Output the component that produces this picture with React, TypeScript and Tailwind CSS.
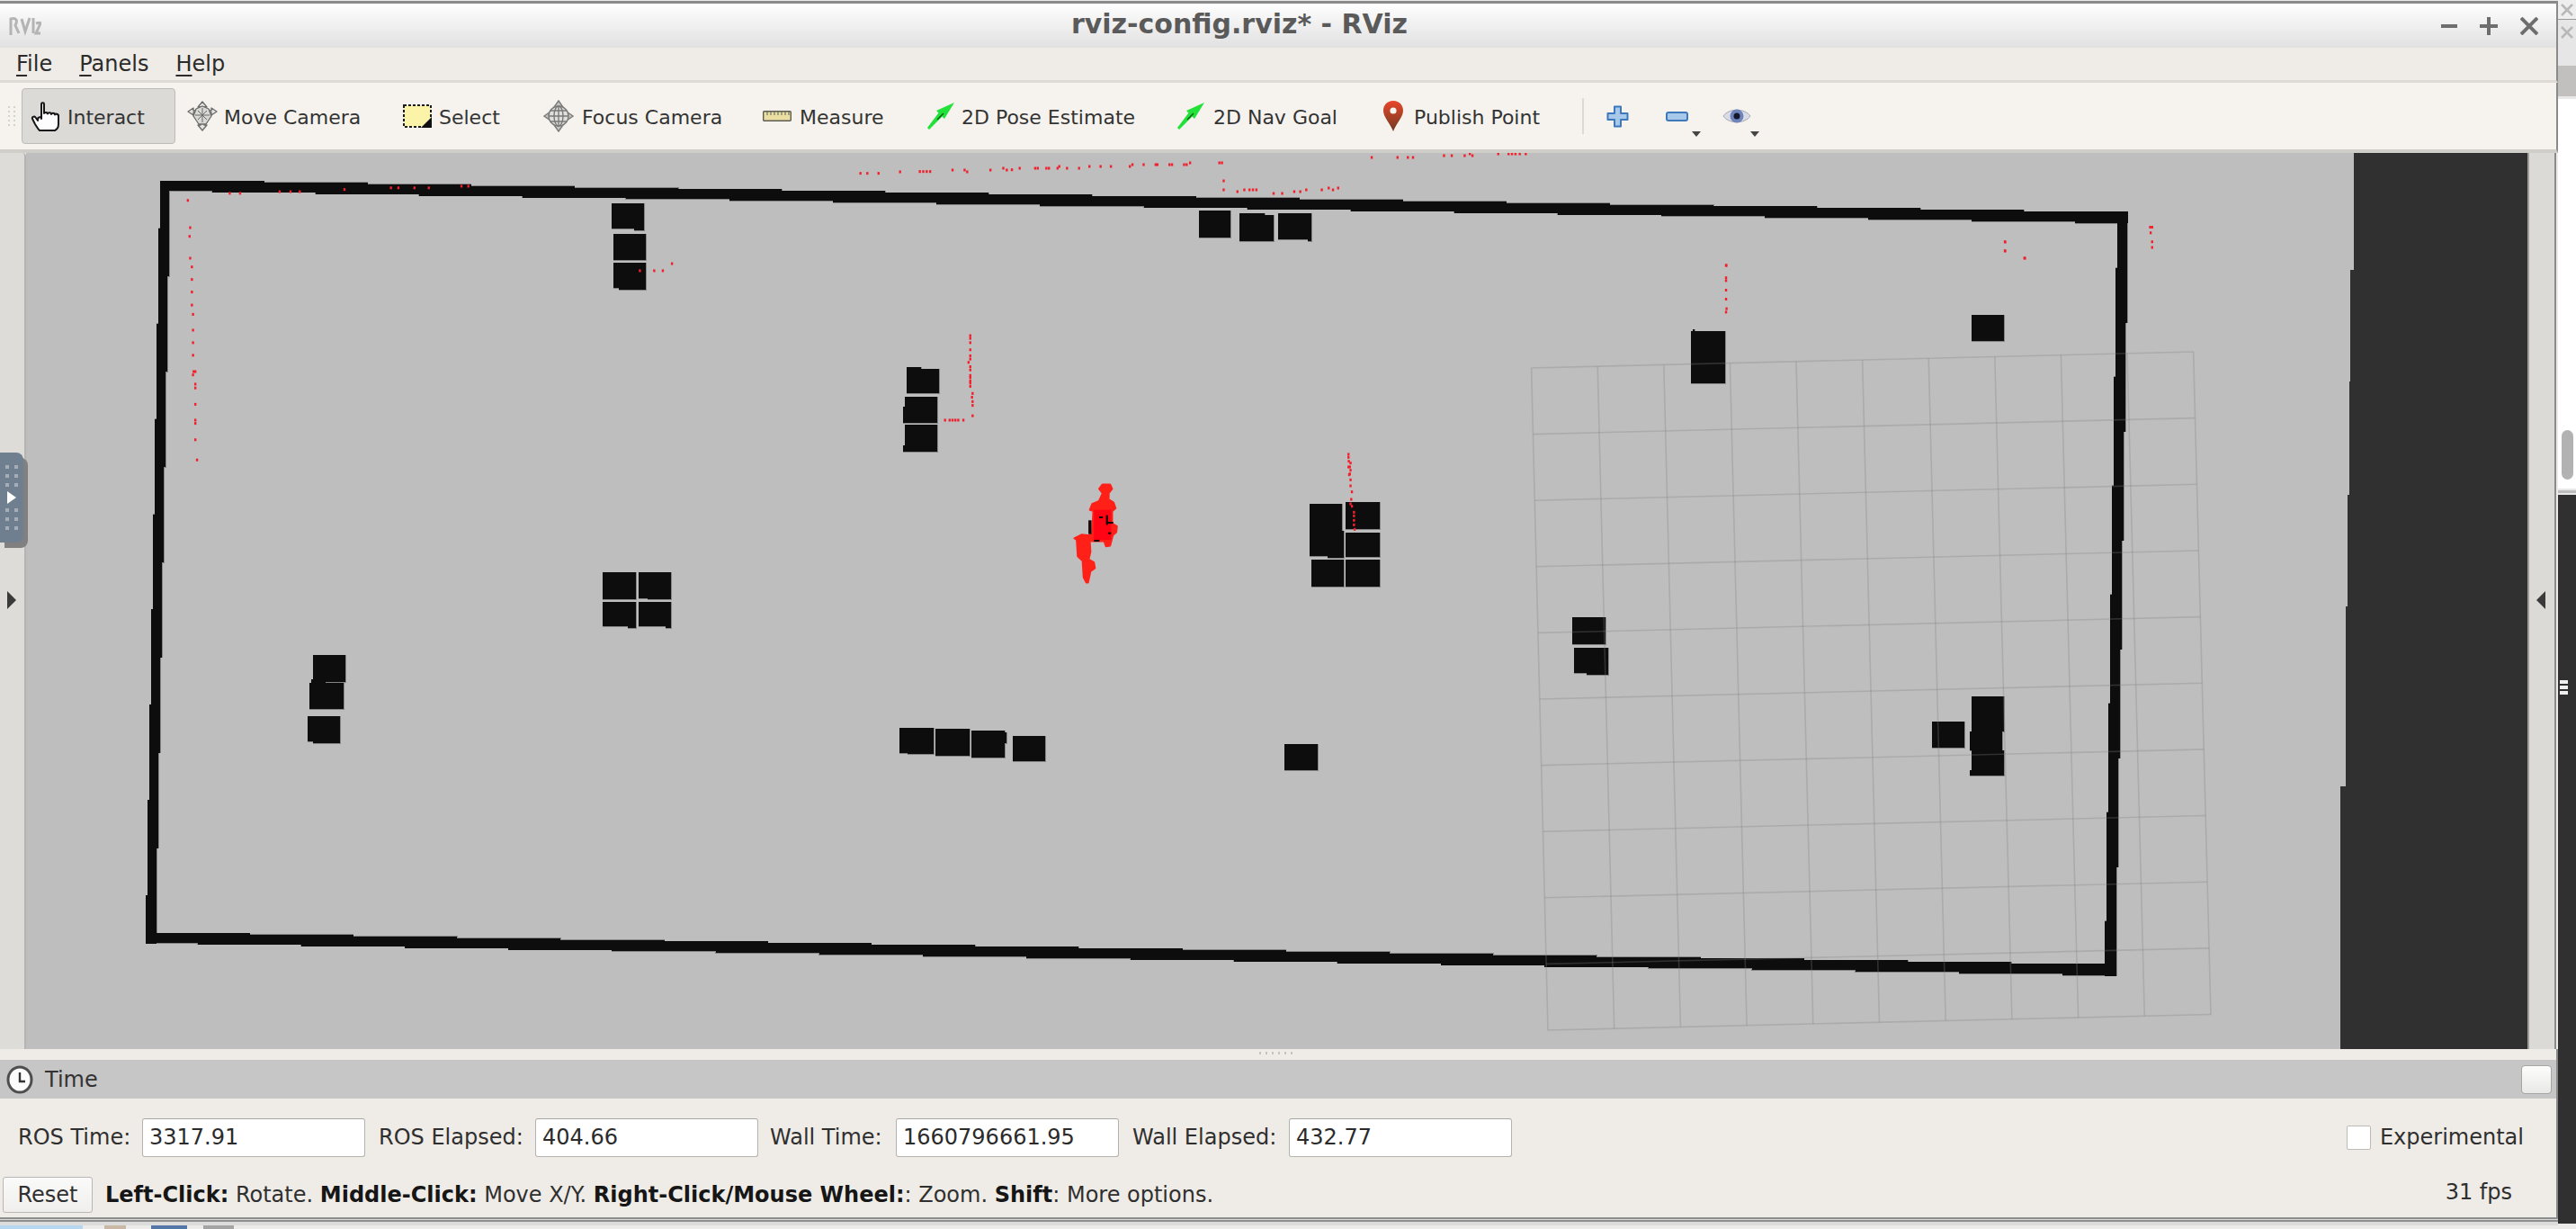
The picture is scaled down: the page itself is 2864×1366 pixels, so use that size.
import React from "react";

type R = [number, number, number, number];

const blocks: R[] = [
  [680, 226, 716, 254], [705, 252, 716, 256], [682, 260, 718, 289], [682, 292, 718, 320], [688, 319, 718, 322],
  [670, 636, 707, 666], [710, 636, 746, 665], [720, 664, 746, 666], [670, 669, 707, 696], [698, 695, 707, 698], [710, 669, 746, 696], [740, 695, 746, 698],
  [348, 728, 384, 758], [346, 755, 362, 760], [344, 759, 382, 788], [342, 796, 378, 824], [348, 823, 378, 826],
  [1008, 408, 1024, 412], [1008, 410, 1044, 437], [1006, 441, 1042, 470], [1004, 452, 1007, 470], [1006, 472, 1042, 502], [1004, 495, 1007, 502],
  [1000, 809, 1038, 837], [1009, 836, 1038, 838], [1040, 810, 1078, 840], [1080, 812, 1117, 842], [1116, 814, 1119, 826], [1126, 818, 1162, 846],
  [1333, 234, 1368, 264], [1378, 237, 1406, 268], [1406, 239, 1416, 268], [1421, 237, 1458, 266], [1454, 265, 1458, 268],
  [1456, 560, 1492, 618], [1476, 590, 1494, 620], [1496, 558, 1534, 588], [1496, 592, 1534, 619], [1458, 622, 1494, 652], [1496, 622, 1534, 652], [1532, 622, 1534, 640],
  [1880, 368, 1918, 426], [1882, 366, 1884, 369], [2192, 350, 2228, 379],
  [1748, 686, 1785, 716], [1750, 720, 1788, 748], [1764, 747, 1788, 750],
  [2148, 802, 2184, 831], [2192, 774, 2228, 813], [2190, 813, 2226, 834], [2192, 834, 2228, 862], [2190, 856, 2192, 862],
  [1428, 827, 1465, 856],
];

const z10 = (X: number, Y: number) => [900 + X / 1.045, 160 + Y / 3];
const z11 = (X: number, Y: number) => [150 + X / 1.568, 170 + Y / 1.65];
const z12 = (X: number, Y: number) => [1650 + X / 1.845, 190 + Y / 1.6];
const z7 = (X: number, Y: number) => [1000 + X / 2.613, 480 + Y / 3];

const dots: number[][] = [
  ...([
    [59, 98], [67, 98], [80, 98], [105, 93], [128, 92], [132, 92], [136, 92], [140, 92], [166, 87], [180, 87], [183, 93], [210, 87], [225, 81], [229, 87], [235, 86], [244, 81], [262, 81], [265, 81], [275, 81], [278, 81], [288, 81], [290, 75], [299, 81], [313, 81], [325, 75], [338, 75], [350, 75], [372, 75], [375, 69], [388, 69], [402, 69], [404, 69], [418, 69], [421, 69], [435, 69], [438, 69], [442, 63], [476, 63], [479, 63],
    [653, 45], [683, 45], [695, 45], [701, 45], [737, 39], [746, 39], [761, 39], [767, 33], [770, 39], [800, 33], [812, 33], [816, 33], [820, 33], [825, 33], [832, 33],
    [481, 123], [481, 153], [497, 159], [505, 153], [511, 153], [515, 153], [519, 153], [539, 165], [549, 165], [563, 159], [570, 159], [577, 153], [595, 153], [603, 147], [608, 153], [614, 147],
    [1389, 327], [1389, 357], [1412, 381], [1065, 405],
  ] as number[][]).map(([a, b]) => z10(a, b)),
  ...([
    [92, 87], [96, 137], [95, 153], [96, 193], [99, 209], [99, 232], [99, 255], [99, 279], [101, 296], [101, 325], [101, 348], [101, 371], [102, 401], [105, 401], [101, 407], [105, 424], [105, 431], [105, 461], [105, 490], [105, 496], [105, 526], [108, 563],
    [165, 74], [183, 74], [252, 71], [271, 71], [287, 71], [365, 67], [446, 64], [459, 64], [487, 64], [512, 64], [569, 61], [581, 61],
    [880, 216], [905, 216], [920, 216], [936, 203],
    [1456, 335], [1456, 340], [1456, 348], [1456, 361], [1456, 372], [1456, 378], [1453, 384], [1456, 392], [1456, 398], [1456, 408], [1456, 412], [1456, 418], [1456, 422], [1456, 428], [1460, 441], [1459, 448], [1460, 456], [1460, 463], [1460, 482],
    [1412, 490], [1420, 490], [1425, 490], [1430, 490], [1435, 490], [1444, 490],
  ] as number[][]).map(([a, b]) => z11(a, b)),
  ...([
    [496, 168], [496, 190], [496, 195], [496, 212], [496, 228], [497, 245], [496, 251], [1068, 126], [1068, 142], [1108, 155], [1366, 100], [1370, 100], [1367, 110], [1370, 126], [1370, 136],
  ] as number[][]).map(([a, b]) => z12(a, b)),
  ...([
    [1304, 75], [1304, 85], [1305, 98], [1310, 104], [1304, 117], [1308, 117], [1310, 128], [1308, 140], [1306, 143], [1310, 160], [1310, 180], [1314, 200], [1312, 225], [1310, 240], [1314, 248], [1320, 268], [1320, 280], [1320, 295], [1320, 310], [1322, 325],
  ] as number[][]).map(([a, b]) => z7(a, b)),
];

function hWall(x0: number, y0: number, x1: number, y1: number, H: number, L: number): R[] {
  const n = Math.ceil((x1 - x0) / L);
  const dy = (y1 - y0) / n;
  const step = (x1 - x0) / n;
  const out: R[] = [];
  for (let k = 0; k < 2 * n; k++) {
    const xa = x0 + (k * step) / 2;
    const top = y0 + Math.floor(k / 2) * dy;
    const bot = y0 + H + Math.floor((k + 1) / 2) * dy;
    out.push([xa, top, xa + step / 2 + 0.5, bot]);
  }
  return out;
}

function vWall(x0: number, y0: number, x1: number, y1: number, W: number, L: number): R[] {
  const n = Math.ceil((y1 - y0) / L);
  const dx = (x1 - x0) / n;
  const step = (y1 - y0) / n;
  const out: R[] = [];
  for (let k = 0; k < 2 * n; k++) {
    const ya = y0 + (k * step) / 2;
    const left = x0 + Math.floor((k + 1) / 2) * dx;
    const right = x0 + W + Math.floor(k / 2) * dx;
    out.push([left, ya, right, ya + step / 2 + 0.5]);
  }
  return out;
}

const walls: R[] = [
  ...hWall(178, 201, 2365, 237, 11, 118),
  ...hWall(162, 1037, 2351, 1073, 11, 118),
  ...vWall(178, 201, 162, 1048, 10, 111),
  ...vWall(2354, 237, 2340, 1084, 11, 122),
];

const rectProps = ([a, b, c, d]: R) => ({ x: a, y: b, width: c - a, height: d - b });

const C = { tl: [1702.6, 409], tr: [2438.6, 391], bl: [1721, 1145], br: [2458, 1127.5] };
const mix = (p: number[], q: number[], t: number) => [p[0] + (q[0] - p[0]) * t, p[1] + (q[1] - p[1]) * t];

function MapView() {
  const ticks = Array.from({ length: 11 }, (_, i) => i / 10);
  return (
    <svg viewBox="29 170 2781 996" className="block w-[2781px] h-[996px]">
      <rect x="29" y="170" width="2781" height="996" fill="#bebebe" />
      <path d="M2617 170H2810V1166H2602V1100V874H2608V674H2610V550H2612V424H2613V300H2617Z" fill="#303030" />
      <g shapeRendering="crispEdges">
        {[...walls, ...blocks].map((r, i) => (
          <rect key={i} {...rectProps(r)} fill="#858585" stroke="#858585" strokeWidth="1" />
        ))}
        {[...walls, ...blocks].map((r, i) => (
          <rect key={i} {...rectProps(r)} fill="#0d0d0d" />
        ))}
      </g>
      {dots.map(([x, y], i) => (
        <rect key={i} x={x - 1} y={y - 1.5} width="2.4" height="3" fill="#f2202c" />
      ))}
      <g transform="translate(1000 480) scale(0.3827 0.3333)">
        <path
          d="M590 175L612 175L618 190L608 205L608 225L622 235L628 255L618 265L618 305L632 315L630 335L620 345L612 380L600 382L595 365L558 365L555 352L552 345L555 400L550 425L565 435L568 455L555 465L548 503L543 503L535 485L532 430L518 415L515 360L508 355L530 342L552 345L560 340L563 265L553 260L560 240L580 230L590 205L580 190Z"
          fill="#ff2018"
          stroke="#ff2018"
          strokeWidth="5"
          strokeLinejoin="round"
        />
        <rect x="565" y="260" width="50" height="100" fill="#ff0414" />
        <g fill="#1a0505">
          <rect x="549" y="295" width="9" height="46" />
          <rect x="600" y="278" width="6" height="32" />
          <rect x="580" y="282" width="11" height="6" />
          <rect x="605" y="300" width="16" height="6" />
          <rect x="565" y="360" width="16" height="6" />
          <rect x="606" y="335" width="9" height="6" />
        </g>
      </g>
      <g stroke="#808080" strokeOpacity="0.3" strokeWidth="1.6" fill="none">
        {ticks.map((t) => {
          const a = mix(C.tl, C.tr, t);
          const b = mix(C.bl, C.br, t);
          return <line key={`v${t}`} x1={a[0]} y1={a[1]} x2={b[0]} y2={b[1]} />;
        })}
        {ticks.map((t) => {
          const a = mix(C.tl, C.bl, t);
          const b = mix(C.tr, C.br, t);
          return <line key={`h${t}`} x1={a[0]} y1={a[1]} x2={b[0]} y2={b[1]} />;
        })}
      </g>
    </svg>
  );
}

const HandIcon = () => (
  <svg viewBox="0 0 34 34" className="w-[34px] h-[34px]">
    <path
      d="M12 20V3.5C12 1.8 15 1.8 15 3.5V14C15 12.6 19 12.6 19 14.5C19 12.8 23 12.8 23 15C23 13.2 27 13.4 27 15.5C27 14 31 14.4 31 16.5V26C31 29 29 32 27 33H10C8 31 7 29 5 26L2 20C1.3 18 4 16.6 5.5 18.5L8 22V20.5C8 18 12 17 12 20Z"
      fill="#fdfdfd"
      stroke="#161616"
      strokeWidth="2"
      strokeLinejoin="round"
    />
  </svg>
);

const MoveIcon = () => (
  <svg viewBox="0 0 34 34" className="w-[34px] h-[34px]" fill="#e4e4e0" stroke="#6a6a6a" strokeWidth="1.3" strokeLinejoin="round">
    <path d="M17 1L22 7H19V27H22L17 33L12 27H15V7H12Z" />
    <path d="M1 12L7 8V11H27V8L33 12L27 16V13H7V16Z" />
    <path d="M10 9L17 6L24 9L27 17L21 26H13L7 17Z" fill="#d8d8d4" />
    <path d="M17 8V24M9 16H25M12 11L22 21M22 11L12 21" fill="none" strokeWidth="1" />
  </svg>
);

const SelectIcon = () => (
  <svg viewBox="0 0 32 26" className="w-[32px] h-[26px]">
    <rect x="1" y="1" width="30" height="24" fill="#fbf4a8" stroke="#1c1c1c" strokeWidth="2" strokeDasharray="3 2" />
    <path d="M32 14V26H20Z" fill="#101010" />
  </svg>
);

const FocusIcon = () => (
  <svg viewBox="0 0 34 36" className="w-[34px] h-[36px]" fill="none" stroke="#7a7a7a" strokeWidth="1.4">
    <path d="M17 1L22 8H12Z" fill="#c4c4c0" />
    <path d="M17 35L22 28H12Z" fill="#c4c4c0" />
    <path d="M1 18L8 13V23Z" fill="#c4c4c0" />
    <path d="M33 18L26 13V23Z" fill="#c4c4c0" />
    <circle cx="17" cy="18" r="11" fill="#dfdfdb" />
    <ellipse cx="17" cy="18" rx="5" ry="11" />
    <path d="M6 18H28M8 12H26M8 24H26M17 7V29" />
  </svg>
);

const MeasureIcon = () => (
  <svg viewBox="0 0 32 12" className="w-[32px] h-[12px]">
    <rect x="0.7" y="0.7" width="30.6" height="10.6" rx="1" fill="#eadfa0" stroke="#5c5c54" strokeWidth="1.4" />
    <path d="M5 1V5M9 1V5M13 1V5M17 1V5M21 1V5M25 1V5M29 1V5" stroke="#5c5c54" strokeWidth="1" />
  </svg>
);

const ArrowIcon = () => (
  <svg viewBox="0 0 32 30" className="w-[32px] h-[30px]">
    <path d="M31 0L20 18L17.5 15.5L3 30L1 28L13.5 11.5L11 9Z" fill="#22e23a" />
    <path d="M12 19L19 12" stroke="#0a5a14" strokeWidth="1.5" />
  </svg>
);

const PinIcon = () => (
  <svg viewBox="0 0 24 34" className="w-[24px] h-[34px]">
    <defs>
      <linearGradient id="pin" x1="0" y1="0" x2="0" y2="1">
        <stop offset="0" stopColor="#e8462a" />
        <stop offset="1" stopColor="#6e3b22" />
      </linearGradient>
    </defs>
    <path d="M12 0C5 0 1 5 1 11C1 18 8 24 12 34C16 24 23 18 23 11C23 5 19 0 12 0Z" fill="url(#pin)" />
    <circle cx="12" cy="11" r="3.6" fill="#f6f3ee" />
  </svg>
);

const PlusIcon = () => (
  <svg viewBox="0 0 25 25" className="w-[25px] h-[25px]">
    <path d="M9 1.5H16V9H23.5V16H16V23.5H9V16H1.5V9H9Z" fill="#a8c8ea" stroke="#3d78bc" strokeWidth="2" strokeLinejoin="round" />
  </svg>
);

const MinusIcon = () => (
  <svg viewBox="0 0 25 11" className="w-[25px] h-[11px]">
    <rect x="1" y="1" width="23" height="9" rx="2" fill="#a8c8ea" stroke="#3d78bc" strokeWidth="2" />
  </svg>
);

const EyeIcon = () => (
  <svg viewBox="0 0 32 22" className="w-[32px] h-[22px]">
    <path d="M1 11C7 2 25 2 31 11C25 20 7 20 1 11Z" fill="#d9dbe6" stroke="#a3a6b4" />
    <circle cx="16" cy="11" r="7.5" fill="#6f84b8" />
    <circle cx="16" cy="11" r="3.5" fill="#14182c" />
  </svg>
);

const GhostX = () => (
  <svg viewBox="0 0 16 16" className="w-[16px] h-[16px]">
    <path d="M2 2L14 14M14 2L2 14" stroke="#b8b8b8" strokeWidth="2.5" />
  </svg>
);

const Caret = () => <div className="w-0 h-0 border-l-[5px] border-r-[5px] border-t-[6px] border-l-transparent border-r-transparent border-t-[#444]" />;

const tools = [
  { label: "Interact", icon: <HandIcon />, box: "w-[171px] pl-[9px] bg-[#dcdad6] border border-[#bdbbb7] rounded-[4px]", text: "ml-[7px]" },
  { label: "Move Camera", icon: <MoveIcon />, box: "w-[240px] pl-[13px]", text: "ml-[7px]" },
  { label: "Select", icon: <SelectIcon />, box: "w-[156px] pl-[13px]", text: "ml-[8px]" },
  { label: "Focus Camera", icon: <FocusIcon />, box: "w-[244px] pl-[13px]", text: "ml-[9px]" },
  { label: "Measure", icon: <MeasureIcon />, box: "w-[182px] pl-[13px]", text: "ml-[9px]" },
  { label: "2D Pose Estimate", icon: <ArrowIcon />, box: "w-[278px] pl-[13px]", text: "ml-[7px]" },
  { label: "2D Nav Goal", icon: <ArrowIcon />, box: "w-[229px] pl-[13px]", text: "ml-[9px]" },
  { label: "Publish Point", icon: <PinIcon />, box: "w-[221px] pl-[13px]", text: "ml-[11px]" },
];

const Grip = ({ className }: { className: string }) => (
  <div className={`grid grid-cols-2 ${className}`}>
    {Array.from({ length: 6 }, (_, i) => (
      <div key={i} className="w-[4px] h-[4px] bg-[#a5adb8]" />
    ))}
  </div>
);

const Field = ({ label, value, box }: { label: string; value: string; box: string }) => (
  <div className={`flex items-center ${box}`}>
    <span className="whitespace-nowrap">{label}</span>
    <div className="ml-auto w-[248px] h-[43px] bg-white border border-[#b5b3af] border-t-[#a9a7a3] rounded-[3px] flex items-center pl-[7px] text-[#2b2b2b]">
      {value}
    </div>
  </div>
);

export default function App() {
  return (
    <div className="w-[2864px] h-[1366px] flex overflow-hidden bg-[#ecebe9] text-[#2f2f2f] text-[24px] font-['DejaVu_Sans',sans-serif] relative">
      <div className="w-[2844px] h-[1366px] flex flex-col shrink-0">
        <div className="h-[4px] bg-[#8a8a8a] border-t border-[#e8e8e8] shrink-0" />
        <div className="h-[49px] shrink-0 flex items-center bg-gradient-to-b from-[#fefefe] to-[#e1e1e1] border-r-2 border-[#8a8a8a]">
          <div className="w-[46px] pl-[10px] shrink-0">
            <svg viewBox="0 0 36 24" className="w-[36px] h-[24px]" fill="none" stroke="#b4b4b4" strokeWidth="3">
              <path d="M2 22V4C8 2 10 6 7 11L11 20M14 4L18 18L23 3M27 3V20M30 9C33 8 35 8 35 9L30 20H35" />
            </svg>
          </div>
          <div className="flex-1 text-center font-bold text-[#5a5a5a] text-[30px] leading-none -mt-[4px] pr-[4px]">rviz-config.rviz* - RViz</div>
          <div className="flex items-center gap-[25px] pr-[20px] shrink-0">
            <svg viewBox="0 0 18 20" className="w-[18px] h-[20px]"><path d="M0 10H18" stroke="#6e6e6e" strokeWidth="4" /></svg>
            <svg viewBox="0 0 20 20" className="w-[20px] h-[20px]"><path d="M0 10H20M10 0V20" stroke="#6e6e6e" strokeWidth="4" /></svg>
            <svg viewBox="0 0 20 20" className="w-[20px] h-[20px]"><path d="M1 1L19 19M19 1L1 19" stroke="#6e6e6e" strokeWidth="4" /></svg>
          </div>
        </div>
        <div className="h-[39px] shrink-0 bg-[#efece7] border-b-[3px] border-[#dedbd6] border-r-2 border-r-[#8a8a8a] flex items-center pl-[18px] gap-[30px] text-[#2b2b2b]">
          <span><span className="underline underline-offset-[4px]">F</span>ile</span>
          <span><span className="underline underline-offset-[4px]">P</span>anels</span>
          <span><span className="underline underline-offset-[4px]">H</span>elp</span>
        </div>
        <div className="h-[78px] shrink-0 bg-[#f6f3ee] border-b-[4px] border-[#d0cec8] border-r-2 border-r-[#8a8a8a] flex items-center text-[#333] text-[22px]">
          <div className="w-[24px] shrink-0 pl-[9px]">
            <div className="grid grid-cols-2 gap-[3px] w-[8px]">
              {Array.from({ length: 10 }, (_, i) => (
                <div key={i} className="w-[2px] h-[2px] bg-[#d4d2cd]" />
              ))}
            </div>
          </div>
          {tools.map((t) => (
            <div key={t.label} className={`h-[62px] shrink-0 flex items-center ${t.box}`}>
              {t.icon}
              <span className={`whitespace-nowrap mt-[2px] ${t.text}`}>{t.label}</span>
            </div>
          ))}
          <div className="w-[2px] h-[40px] bg-[#dcdad5] ml-[14px] shrink-0" />
          <div className="ml-[25px] shrink-0"><PlusIcon /></div>
          <div className="ml-[41px] shrink-0 relative">
            <MinusIcon />
            <div className="absolute left-[29px] top-[22px]"><Caret /></div>
          </div>
          <div className="ml-[38px] shrink-0 relative">
            <EyeIcon />
            <div className="absolute left-[31px] top-[28px]"><Caret /></div>
          </div>
        </div>
        <div className="h-[996px] shrink-0 flex relative">
          <div className="w-[29px] shrink-0 bg-[#dddcd8] border-r-2 border-[#b4b4b0] rounded-tr-[4px] flex items-center">
            <div className="w-0 h-0 ml-[8px] mt-[-2px] border-t-[10px] border-b-[10px] border-l-[10px] border-t-transparent border-b-transparent border-l-[#3a3a3a]" />
          </div>
          <MapView />
          <div className="w-[32px] shrink-0 bg-[#dbdad6] border-l-2 border-r-2 border-l-[#a09e9a] border-r-[#8a8a8a] flex items-center">
            <div className="w-0 h-0 ml-[8px] mt-[-2px] border-t-[10px] border-b-[10px] border-r-[10px] border-t-transparent border-b-transparent border-r-[#3a3a3a]" />
          </div>
          <div className="absolute left-0 top-[333px] w-[26px] h-[100px] bg-[#6f7f90] rounded-r-[8px] shadow-[5px_6px_0_#808080] flex flex-col items-center justify-center">
            <Grip className="gap-x-[6px] gap-y-[6px]" />
            <div className="w-0 h-0 my-[5px] border-t-[7px] border-b-[7px] border-l-[10px] border-t-transparent border-b-transparent border-l-white" />
            <Grip className="gap-x-[6px] gap-y-[6px]" />
          </div>
        </div>
        <div className="h-[12px] shrink-0 bg-[#efece7] border-r-2 border-[#8a8a8a] flex justify-center pr-[6px] pt-[3px] gap-[5px]">
          {Array.from({ length: 6 }, (_, i) => (
            <div key={i} className="w-[2px] h-[3px] bg-[#c6c4c0]" />
          ))}
        </div>
        <div className="h-[43px] shrink-0 bg-[#c6c6c6] border-r-2 border-[#8a8a8a] flex items-center pl-[7px] pr-[5px]">
          <svg viewBox="0 0 30 32" className="w-[30px] h-[32px]">
            <ellipse cx="15" cy="16" rx="13" ry="14" fill="#fbfbfb" stroke="#4e4e4e" strokeWidth="3" />
            <path d="M15 8V18H21" fill="none" stroke="#333" strokeWidth="2.4" />
          </svg>
          <span className="ml-[13px] text-[#333]">Time</span>
          <div className="ml-auto w-[34px] h-[32px] rounded-[4px] bg-gradient-to-b from-[#fdfdfd] to-[#e8e8e6] border border-[#a6a6a4]" />
        </div>
        <div className="h-[132px] shrink-0 bg-[#efece7] border-r-2 border-[#8a8a8a] flex flex-col relative">
          <div className="h-[86px] flex items-center pl-[20px] pr-[36px]">
            <Field label="ROS Time:" value="3317.91" box="w-[386px]" />
            <Field label="ROS Elapsed:" value="404.66" box="w-[422px] ml-[15px]" />
            <Field label="Wall Time:" value="1660796661.95" box="w-[388px] ml-[13px]" />
            <Field label="Wall Elapsed:" value="432.77" box="w-[422px] ml-[15px]" />
            <div className="ml-auto flex items-center">
              <div className="w-[27px] h-[27px] bg-white border border-[#bdbbb7] rounded-[2px]" />
              <span className="ml-[10px]">Experimental</span>
            </div>
          </div>
          <div className="flex-1 flex items-center pl-[3px] pr-[49px] pb-[4px]">
            <div className="w-[100px] h-[40px] bg-gradient-to-b from-[#fafafa] to-[#f0efed] border border-[#b9b7b3] rounded-[3px] flex items-center justify-center">Reset</div>
            <span className="ml-[14px] whitespace-nowrap">
              <b className="font-bold text-[#161616]">Left-Click:</b> Rotate. <b className="font-bold text-[#161616]">Middle-Click:</b> Move X/Y. <b className="font-bold text-[#161616]">Right-Click/Mouse Wheel:</b>: Zoom. <b className="font-bold text-[#161616]">Shift</b>: More options.
            </span>
            <span className="ml-auto -mt-[6px]">31 fps</span>
          </div>
        </div>
        <div className="h-[5px] shrink-0 border-t-2 border-b-2 border-[#8f8f8f] bg-[#d8d8d8]" />
        <div className="h-[4px] shrink-0 bg-[#dcdcdc]" />
        <div className="flex-1 flex bg-[#ecebe9]">
          <div className="w-[92px] bg-[#b7d7f0]" />
          <div className="w-[24px] ml-[24px] bg-[#c9b8a6]" />
          <div className="w-[40px] ml-[28px] bg-[#5277a8]" />
          <div className="w-[34px] ml-[18px] bg-[#a4a4a4]" />
        </div>
      </div>
      <div className="w-[20px] h-[1366px] shrink-0 flex flex-col">
        <div className="h-[22px] bg-[#eeeeee] border-b border-[#999] flex items-center justify-center shrink-0"><GhostX /></div>
        <div className="h-[51px] bg-[#e6e6e6] shrink-0 flex items-start justify-center pt-[6px]"><GhostX /></div>
        <div className="h-[34px] bg-[#c2bfbf] shrink-0" />
        <div className="h-[3px] bg-[#e8e8e8] shrink-0" />
        <div className="h-[433px] bg-white shrink-0 flex flex-col items-center justify-end pb-[10px]">
          <div className="w-[13px] h-[55px] rounded-full bg-[#b2b2b2]" />
        </div>
        <div className="h-[7px] bg-[#bdbdbd] border-y-2 border-[#e8e8e8] shrink-0" />
        <div className="h-[810px] bg-[#303030] shrink-0 relative">
          <div className="absolute left-[2px] top-[206px] flex flex-col gap-[2px]">
            <div className="w-[9px] h-[4px] bg-[#f0f0f0]" />
            <div className="w-[9px] h-[4px] bg-[#f0f0f0]" />
            <div className="w-[9px] h-[4px] bg-[#f0f0f0]" />
          </div>
        </div>
        <div className="flex-1 bg-[#ecebe9]" />
      </div>
    </div>
  );
}
